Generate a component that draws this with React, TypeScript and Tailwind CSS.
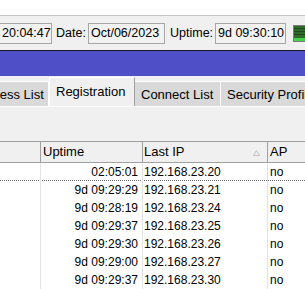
const rows = [
  { uptime: '02:05:01', ip: '192.168.23.20', ap: 'no' },
  { uptime: '9d 09:29:29', ip: '192.168.23.21', ap: 'no' },
  { uptime: '9d 09:28:19', ip: '192.168.23.24', ap: 'no' },
  { uptime: '9d 09:29:37', ip: '192.168.23.25', ap: 'no' },
  { uptime: '9d 09:29:30', ip: '192.168.23.26', ap: 'no' },
  { uptime: '9d 09:29:00', ip: '192.168.23.27', ap: 'no' },
  { uptime: '9d 09:29:37', ip: '192.168.23.30', ap: 'no' },
];

function Field({ value, className }: { value: string; className: string }) {
  return (
    <div
      className={`flex h-[21px] shrink-0 items-center border border-[#a6a6a6] bg-[#f2f2f2] pl-[2px] text-[12.5px] leading-none text-black ${className}`}
    >
      {value}
    </div>
  );
}

function Tab({ label, active, className }: { label: string; active?: boolean; className: string }) {
  if (active) {
    return (
      <div
        className={`relative z-10 -mb-px flex h-[30px] shrink-0 items-start border-l border-t border-r border-l-white border-t-white border-r-[#a0a0a0] bg-[#f0f0f0] pl-[6px] pt-[6px] text-[13px] leading-[15px] ${className}`}
      >
        {label}
      </div>
    );
  }
  return (
    <div
      className={`flex h-[25px] shrink-0 items-center overflow-hidden whitespace-nowrap border-r border-t border-white bg-[#d9d9d9] pl-[6px] text-[13px] leading-none ${className}`}
    >
      {label}
    </div>
  );
}

export default function App() {
  return (
    <div className="h-[289px] w-[305px] overflow-hidden bg-white font-['Liberation_Sans',Arial,sans-serif] text-black">
      {/* Top white strip */}
      <div className="h-[15px] bg-white" />

      {/* Status toolbar */}
      <div className="flex h-[36px] items-center overflow-hidden border-t border-b border-t-[#c4c4c4] border-b-[#1a1a1a] bg-[#f0f0f0]">
        <Field value="20:04:47" className="-ml-px w-[53px]" />
        <span className="ml-[4px] w-[32px] shrink-0 text-[12.5px]">Date:</span>
        <Field value="Oct/06/2023" className="w-[77px]" />
        <span className="ml-[5px] w-[45px] shrink-0 text-[12.5px]">Uptime:</span>
        <Field value="9d 09:30:10" className="w-[71px]" />
        <div className="ml-[7px] flex h-[17px] w-[16px] shrink-0 flex-col border border-[#7a7a7a] bg-[#2f6a2a]">
          <div className="h-[3px] border-b border-[#1f4a1c]" />
          <div className="h-[3px] border-b border-[#1f4a1c]" />
          <div className="h-[3px] border-b border-[#1f4a1c]" />
          <div className="flex-1" />
          <div className="h-[3px] bg-[#46d246]" />
        </div>
      </div>

      {/* Window title bar */}
      <div className="h-[25px] bg-[#4f4fc8]" />

      {/* Tabs */}
      <div className="flex h-[30px] items-end overflow-hidden bg-[#f0f0f0]">
        <Tab label="Access List" className="-ml-[28px] w-[77px]" />
        <Tab label="Registration" active className="w-[86px]" />
        <Tab label="Connect List" className="w-[86px]" />
        <Tab label="Security Profiles" className="w-[120px]" />
      </div>

      {/* Tab pane toolbar (empty) */}
      <div className="h-[35px] border-t border-white bg-[#f0f0f0]" />

      {/* Table */}
      <div className="bg-white">
        <div className="grid h-[22px] grid-cols-[41px_102px_125px_1fr] border-t border-b border-[#a0a0a0] bg-[#f0f0f0] text-[13px]">
          <div className="border-r border-[#a0a0a0]" />
          <div className="flex items-center border-r border-[#a0a0a0] pl-[2px]">Uptime</div>
          <div className="flex items-center justify-between border-r border-[#a0a0a0] pl-[1px] pr-[7px]">
            <span>Last IP</span>
            <svg width="7" height="6" viewBox="0 0 7 6" className="mt-[1px]">
              <path d="M3.5 0.5 L6.5 5.5 L0.5 5.5 Z" fill="none" stroke="#c4c4c4" strokeWidth="1" />
            </svg>
          </div>
          <div className="flex items-center pl-[2px]">AP</div>
        </div>

        {rows.map((row, i) => (
          <div
            key={i}
            className={`grid h-[18px] grid-cols-[41px_102px_125px_1fr] text-[12px] ${
              i === 0 ? 'border-b border-dotted border-[#707070]' : ''
            }`}
          >
            <div className="border-r border-[#e3e3e3]" />
            <div className="flex items-center justify-end border-r border-[#e3e3e3] pr-[4px]">
              {row.uptime}
            </div>
            <div className="flex items-center border-r border-[#e3e3e3] pl-[1px]">{row.ip}</div>
            <div className="flex items-center pl-[2px]">{row.ap}</div>
          </div>
        ))}
      </div>
    </div>
  );
}
